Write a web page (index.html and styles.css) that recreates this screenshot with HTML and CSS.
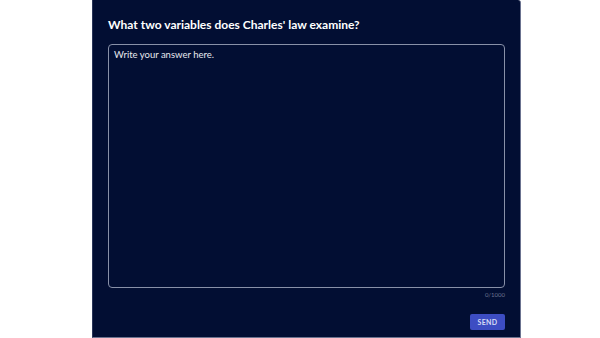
FILE: index.html
```html
<!DOCTYPE html>
<html lang="en">

<head>
    <meta charset="UTF-8">
    <meta name="viewport" content="width=device-width, initial-scale=1.0">
    <title>Short Answer</title>
    <link rel="stylesheet" href="styles.css">
</head>

<body>

    <div class="page">
        <div class="question-card">
            <h3 class="question-title">What two variables does Charles' law examine?</h3>

            <textarea class="answer-input" placeholder="Write your answer here." maxlength="1000"></textarea>
            <div class="char-count">0/1000</div>

            <div class="card-footer">
                <button class="send-btn" type="button">SEND</button>
            </div>
        </div>
    </div>

</body>

</html>
```

FILE: styles.css
```css
/* --- Page --- */
body {
    margin: 0;
    background-color: #ffffff;
    font-family: Lato, "Noto Sans", sans-serif;
}

.page {
    display: flex;
    padding-left: 92px;
}

/* --- Question card --- */
.question-card {
    width: 397px;
    height: 337px;
    padding: 0 15px;
    background-color: #020e33;
    border: 1px solid #6b7390;
    border-top: none;
    border-left-color: #2a3558;
    border-radius: 0 3px 0 0;
    display: flex;
    flex-direction: column;
}

.question-title {
    margin: 17px 0 0;
    font-size: 12px;
    line-height: 16px;
    font-weight: 700;
    color: #ffffff;
}

/* --- Answer field --- */
.answer-input {
    margin-top: 11px;
    height: 244px;
    padding: 4px 5px;
    box-sizing: border-box;
    background: transparent;
    border: 1px solid #8890a8;
    border-radius: 4px;
    font-family: inherit;
    font-size: 9.5px;
    color: #ffffff;
    resize: none;
}

.answer-input::placeholder {
    color: #e6e8ee;
    opacity: 1;
}

.answer-input:focus {
    outline: none;
}

.char-count {
    margin-top: 3px;
    text-align: right;
    font-size: 6px;
    line-height: 8px;
    color: #6d7590;
}

/* --- Footer --- */
.card-footer {
    display: flex;
    justify-content: flex-end;
    margin-top: 15px;
}

.send-btn {
    width: 35px;
    height: 16px;
    padding: 0;
    border: none;
    border-radius: 2px;
    background-color: #3d4dc3;
    color: #d8dcf5;
    font-family: inherit;
    font-size: 7px;
    font-weight: 700;
    letter-spacing: 0.4px;
}
```
